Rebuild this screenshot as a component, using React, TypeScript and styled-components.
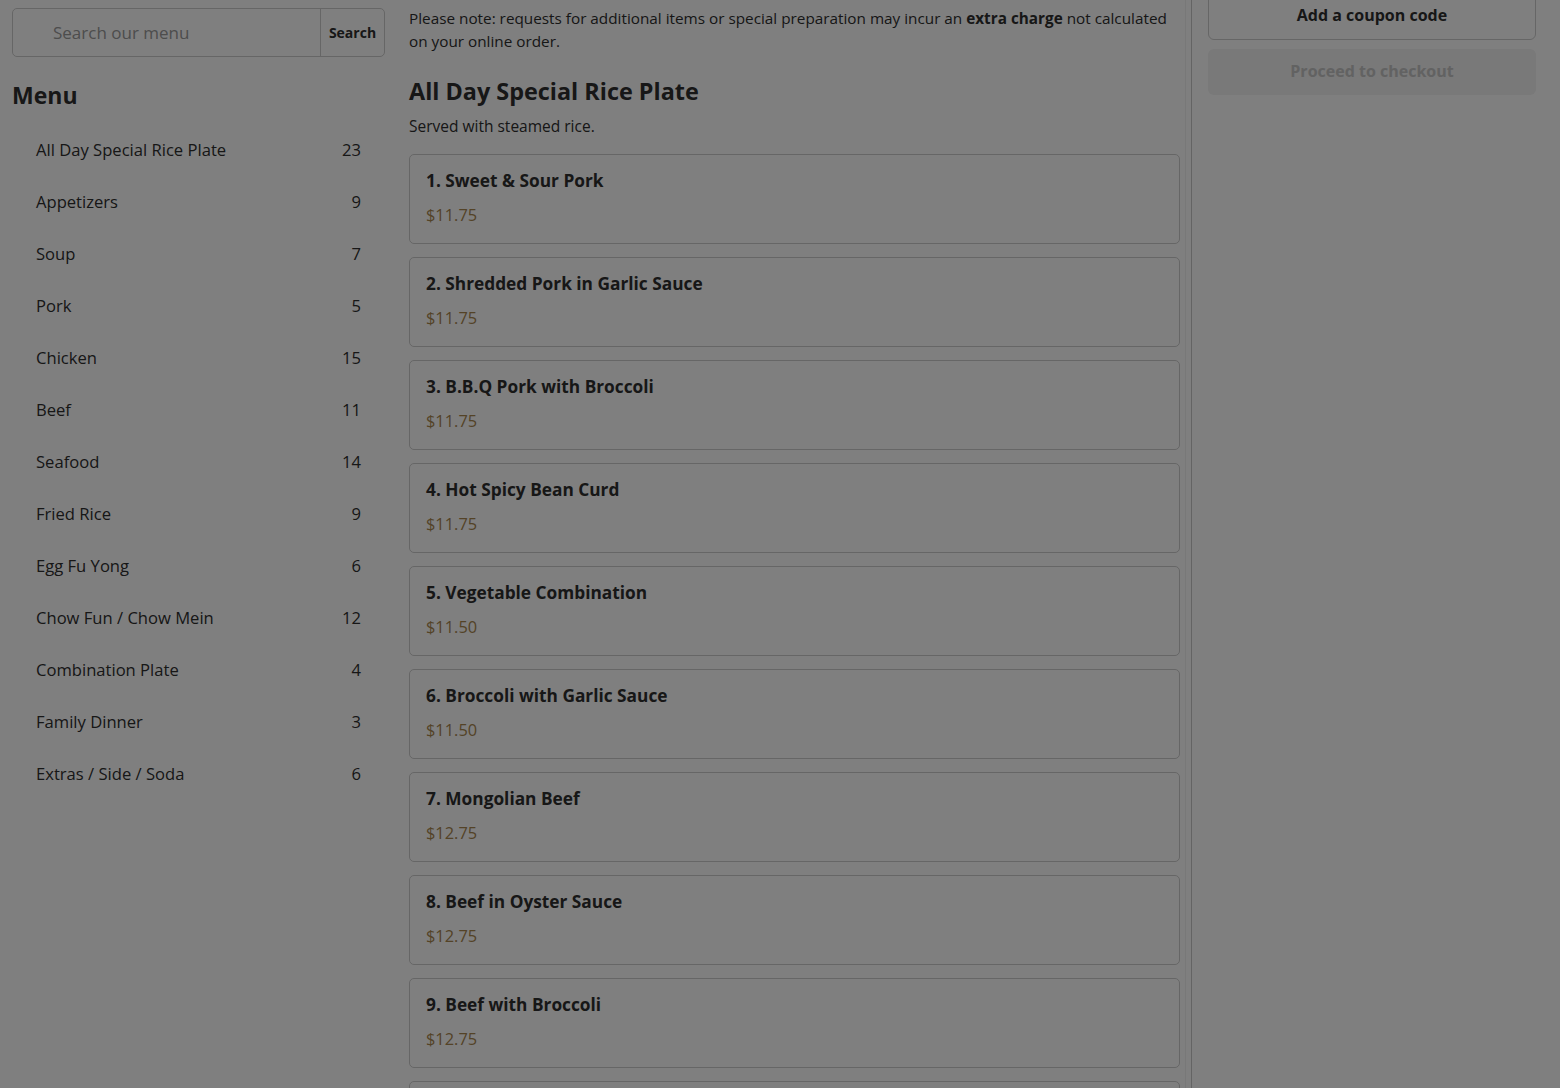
import React from 'react';
import styled, { createGlobalStyle } from 'styled-components';

const colors = {
  text: '#2e2e2e',
  border: '#cccccc',
  price: '#a8864e',
};

const GlobalStyle = createGlobalStyle`
  * { box-sizing: border-box; }
  html, body { margin: 0; padding: 0; background: #ffffff; }
  body {
    font-family: "Open Sans", "Noto Sans", sans-serif;
    color: ${colors.text};
    overflow: hidden;
  }
`;

const Page = styled.div`
  display: grid;
  grid-template-columns: 409px 777px 1fr;
  height: 1088px;
  overflow: hidden;
`;

const Sidebar = styled.aside`
  padding: 8px 0 0 12px;
  margin-right: 24px;
`;

const SearchBox = styled.form`
  display: flex;
  height: 49px;
  border: 1px solid ${colors.border};
  border-radius: 5px;
  overflow: hidden;
`;

const SearchInput = styled.input`
  flex: 1;
  min-width: 0;
  border: none;
  outline: none;
  padding: 0 0 0 40px;
  font-family: inherit;
  font-size: 17px;
  color: ${colors.text};
  background: transparent;

  &::placeholder {
    color: #9a9a9a;
  }
`;

const SearchButton = styled.button`
  width: 64px;
  border: none;
  border-left: 1px solid ${colors.border};
  background: transparent;
  font-family: inherit;
  font-size: 14px;
  font-weight: 700;
  color: ${colors.text};
  padding: 0;
`;

const MenuTitle = styled.h2`
  margin: 22px 0 12px;
  font-size: 23px;
  line-height: 32px;
  font-weight: 700;
`;

const CategoryList = styled.ul`
  list-style: none;
  margin: 0;
  padding: 0;
`;

const Category = styled.li`
  display: flex;
  justify-content: space-between;
  align-items: center;
  height: 52px;
  padding: 0 24px;
  font-size: 16.6px;
  color: ${colors.text};
`;

const Main = styled.main`
  padding: 7px 5px 0 0;
  border-right: 1px solid #f0f0f0;
`;

const Note = styled.p`
  margin: 0;
  font-size: 15.3px;
  line-height: 23px;
  color: ${colors.text};

  b {
    font-weight: 700;
  }
`;

const SectionTitle = styled.h1`
  margin: 22px 0 0;
  font-size: 23.4px;
  line-height: 32px;
  font-weight: 700;
`;

const SectionSub = styled.p`
  margin: 8px 0 17px;
  font-size: 15.5px;
  line-height: 22px;
`;

const ItemList = styled.div`
  display: flex;
  flex-direction: column;
  gap: 13px;
`;

const ItemCard = styled.div`
  height: 90px;
  padding: 14px 16px 0;
  border: 1px solid ${colors.border};
  border-radius: 5px;
`;

const ItemName = styled.h3`
  margin: 0;
  font-size: 17.3px;
  line-height: 24px;
  font-weight: 700;
`;

const ItemPrice = styled.div`
  margin-top: 11px;
  font-size: 16.4px;
  line-height: 22px;
  color: ${colors.price};
`;

const Cart = styled.aside`
  display: flex;
  flex-direction: column;
  gap: 9px;
  margin-left: 5px;
  padding: 0 24px 0 16px;
  border-left: 1px solid #c8c8c8;
`;

const CouponButton = styled.button`
  height: 60px;
  margin-top: -20px;
  padding-top: 10px;
  border: 1px solid ${colors.border};
  border-radius: 6px;
  background: #ffffff;
  font-family: inherit;
  font-size: 16px;
  font-weight: 700;
  color: ${colors.text};
`;

const CheckoutButton = styled.button`
  height: 46px;
  border: none;
  border-radius: 6px;
  background: #f2f2f2;
  font-family: inherit;
  font-size: 16px;
  font-weight: 700;
  color: #c4c4c4;
  padding-bottom: 3px;
`;

const Overlay = styled.div`
  position: fixed;
  inset: 0;
  background: rgba(0, 0, 0, 0.5);
`;

const categories: [string, number][] = [
  ['All Day Special Rice Plate', 23],
  ['Appetizers', 9],
  ['Soup', 7],
  ['Pork', 5],
  ['Chicken', 15],
  ['Beef', 11],
  ['Seafood', 14],
  ['Fried Rice', 9],
  ['Egg Fu Yong', 6],
  ['Chow Fun / Chow Mein', 12],
  ['Combination Plate', 4],
  ['Family Dinner', 3],
  ['Extras / Side / Soda', 6],
];

const items: [string, string][] = [
  ['1. Sweet & Sour Pork', '$11.75'],
  ['2. Shredded Pork in Garlic Sauce', '$11.75'],
  ['3. B.B.Q Pork with Broccoli', '$11.75'],
  ['4. Hot Spicy Bean Curd', '$11.75'],
  ['5. Vegetable Combination', '$11.50'],
  ['6. Broccoli with Garlic Sauce', '$11.50'],
  ['7. Mongolian Beef', '$12.75'],
  ['8. Beef in Oyster Sauce', '$12.75'],
  ['9. Beef with Broccoli', '$12.75'],
  ['10. Pepper Steak', '$12.75'],
];

export default function App(): React.ReactElement {
  return (
    <>
      <GlobalStyle />
      <Page>
        <Sidebar>
          <SearchBox onSubmit={(e) => e.preventDefault()}>
            <SearchInput placeholder='Search our menu' />
            <SearchButton type='submit'>Search</SearchButton>
          </SearchBox>
          <MenuTitle>Menu</MenuTitle>
          <CategoryList>
            {categories.map(([name, count]) => (
              <Category key={name}>
                <span>{name}</span>
                <span>{count}</span>
              </Category>
            ))}
          </CategoryList>
        </Sidebar>
        <Main>
          <Note>
            Please note: requests for additional items or special preparation
            may incur an <b>extra charge</b> not calculated on your online order.
          </Note>
          <SectionTitle>All Day Special Rice Plate</SectionTitle>
          <SectionSub>Served with steamed rice.</SectionSub>
          <ItemList>
            {items.map(([name, price]) => (
              <ItemCard key={name}>
                <ItemName>{name}</ItemName>
                <ItemPrice>{price}</ItemPrice>
              </ItemCard>
            ))}
          </ItemList>
        </Main>
        <Cart>
          <CouponButton>Add a coupon code</CouponButton>
          <CheckoutButton disabled>Proceed to checkout</CheckoutButton>
        </Cart>
      </Page>
      <Overlay />
    </>
  );
}
